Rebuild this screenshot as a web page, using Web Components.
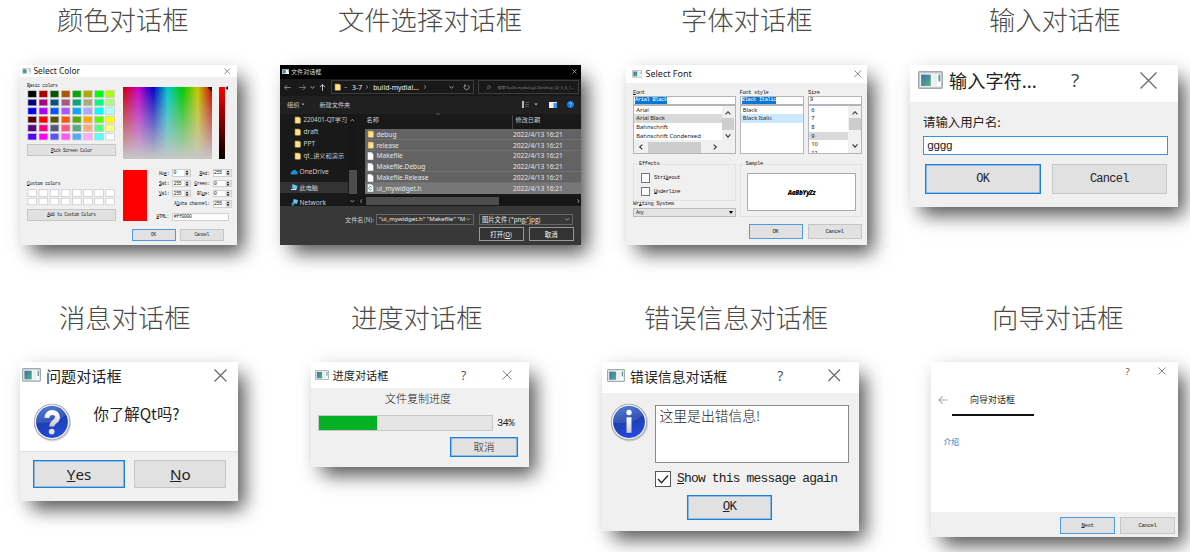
<!DOCTYPE html>
<html lang="zh-CN"><head><meta charset="utf-8"><title>Qt 对话框</title>
<style>
body{margin:0;background:#fff;width:1190px;height:552px;overflow:hidden}
</style></head><body>
<dialog-gallery></dialog-gallery>
<script>
const BASE = `
:host{display:block;box-sizing:border-box;font-family:"Noto Sans","Noto Sans CJK SC",sans-serif;color:#222}
*{box-sizing:border-box}
svg{display:block;flex:none}
.row{display:flex}.col{display:flex;flex-direction:column}
.grow{flex:1}
.mono{font-family:"Liberation Mono","Noto Sans CJK SC",monospace;letter-spacing:-.062em;white-space:nowrap}
.cjk{font-family:"Noto Sans CJK SC",sans-serif;white-space:nowrap}
u{text-underline-offset:.08em;text-decoration-thickness:from-font}
`;
function define(name, css, html) {
  customElements.define(name, class extends HTMLElement {
    constructor() {
      super();
      const root = this.attachShadow({mode: 'open'});
      root.innerHTML = '<style>' + BASE + css + '</style>' + (typeof html === 'function' ? html(this) : html);
    }
  });
}
const num = (el, name, fallback) => +(el.getAttribute(name) ?? fallback);

/* Application icon used in every title bar */
define('app-icon', ':host{flex:none}svg{width:100%;height:100%}',
`<svg viewBox="0 0 24 17" preserveAspectRatio="none"><defs><linearGradient id="g" x2="1" y2="1"><stop stop-color="#3d6fa0"/><stop offset="1" stop-color="#54b38b"/></linearGradient></defs>
<rect x=".7" y=".7" width="22.6" height="15.6" rx="1" fill="#dfe3e6" stroke="#a3a8ac" stroke-width="1.4"/><rect x="2.4" y="3" width="19.2" height="11.6" fill="#fff"/><rect x="3" y="3.4" width="9.3" height="10.8" fill="url(#g)"/><rect x="13.5" y="3.4" width="4.8" height="10.8" fill="#eceeef"/><path d="M20.5 3.4v6.4" stroke="#4d9c92" stroke-width="1.7"/></svg>`);

/* Window title bar: icon, caption, optional help mark, close mark */
define('win-title', `:host{background:#fff}.bar{display:flex;align-items:center;height:100%;white-space:nowrap}.q{text-align:center;color:#444;font-family:"Open Sans",sans-serif}`, el => {
  const x = num(el,'x',8), ic = num(el,'icon',0), qs = num(el,'help',0), gap = num(el,'qgap',0);
  return `<div class="bar" style="padding:0 ${num(el,'pr',6)}px 0 ${num(el,'pl',6)}px">
${ic ? `<app-icon style="width:${ic}px;height:${ic*.72}px;margin-right:${num(el,'gap',4)}px"></app-icon>` : ''}
<span><slot></slot></span><span class="grow"></span>
${qs ? `<span class="q" style="font-size:${qs}px;width:${qs}px;margin-right:${gap-x/2-qs/2}px">?</span>` : ''}
<svg width="${x}" height="${x}" viewBox="0 0 ${x} ${x}"><path d="M.5 .5L${x-.5} ${x-.5}M${x-.5} .5L.5 ${x-.5}" stroke="${el.getAttribute('ink')||'#666'}" stroke-width="${x>12?1.15:.8}"/></svg></div>`;
});

define('push-button', `:host{display:flex;align-items:center;justify-content:center;background:#e1e1e1;border:1px solid #c6c6c6;white-space:pre;flex:none;font-family:"Liberation Mono","Noto Sans CJK SC",monospace;letter-spacing:-.062em}
:host([primary]){border:1px solid #1a80d8;box-shadow:inset 0 0 0 .6px #4a9de2}
:host([slim]){border:1px solid #4c9bde}`, '<slot></slot>');

define('spin-box', `:host{display:flex;width:19px;height:7.6px;border:1px solid #d0d0d0;background:#fff;font-size:4.9px;line-height:5.6px;padding-left:.4px;flex:none}
svg{width:6px;height:5.6px;background:#e4e4e4}`,
`<span class="mono grow"><slot></slot></span><svg viewBox="0 0 6 6.4"><path d="M3 .5L4.7 2.7H1.3zM3 5.9L4.7 3.7H1.3z" fill="#111"/></svg>`);

const COLORS = ['000','a00','005500','aa5500','0a0','aa0','0f0','af0','00007f','aa007f','00557f','aa557f','00aa7f','aaaa7f','00ff7f','aaff7f','00f','a0f','05f','a5f','0af','aaf','0ff','aff','500','f00','550','f50','5a0','fa0','5f0','ff0','55007f','ff007f','55557f','ff557f','55aa7f','ffaa7f','55ff7f','ffff7f','50f','f0f','55f','f5f','5af','faf','5ff','fff'];
define('color-dialog', `
:host{width:216.5px;height:180px;background:#f0f0f0;font-size:4.75px}
win-title{height:12.5px;font-size:8.4px}
.body{padding:5.5px 0 0 7px}
.left{width:89px;margin-right:7px}
.lab{height:6px;line-height:6px}
.sw svg{width:89px}
push-button{font-size:4.5px}
.wide{width:89px;height:11.7px}
.plane{width:88.5px;height:71.5px;background:linear-gradient(transparent,#c8c8c8),linear-gradient(90deg,#c80000,#c800c8 17%,#0000c8 34%,#00c8c8 50%,#00c800 67%,#c8c800 84%,#c80000)}
.plane svg{margin-left:auto}
.val{width:5.5px;height:72px;background:linear-gradient(red,#000);margin-left:7.5px}
.preview{width:23.7px;height:51px;background:red;margin-right:6.5px}
.f{align-items:center;height:10.3px}.f>b{font-weight:400;text-align:right}
.a{width:16px;margin-right:3px}.b{width:17.5px;margin:0 3px 0 1px}
.html{width:57px;height:7.5px;background:#fff;border:1px solid #d0d0d0;line-height:5.6px;padding-left:.6px}
.btns{margin:6.5px 0 0 111.5px;gap:4.2px}.btns>*{width:44px;height:12px}
`, () => {
  const wells = list => `<svg width="89" height="${list.length/8*8.53}">${list.map((c,i)=>`<rect x="${.9+i%8*11.13}" y="${.7+Math.floor(i/8)*8.53}" width="8.7" height="6.6" fill="#${c}" stroke="${c==='f00'?'#a9a9a9':'#c6c6c8'}" stroke-width=".7"/>`).join('')}</svg>`;
  return `<win-title icon="9" pl="1.5" gap="3" x="6.4" pr="5.8" ink="#777">Select Color</win-title>
<div class="row body"><div class="col left">
<div class="lab mono"><u>B</u>asic colors</div>
<div style="margin-top:1.8px">${wells(COLORS)}</div>
<push-button class="wide" style="margin-top:3px"><u>P</u>ick Screen Color</push-button>
<div class="lab mono" style="margin-top:24.5px"><u>C</u>ustom colors</div>
<div style="margin-top:2.6px">${wells(Array(16).fill('fff'))}</div>
<push-button class="wide" style="margin-top:2.6px"><u>A</u>dd to Custom Colors</push-button>
</div><div class="col" style="padding-top:4.5px">
<div class="row"><div class="plane"><svg width="5" height="4"><path d="M1 .8h4M4 .5v3.5" stroke="#000" stroke-width="1.3"/></svg></div><div class="val"></div><svg width="3" height="4" style="margin-top:-1px"><path d="M3 0v4L.5 2z"/></svg></div>
<div class="row" style="margin-top:10.5px"><div class="preview"></div><div class="col mono" style="margin-top:-1.6px">
<div class="row f"><b class="a">Hu<u>e</u>:</b><spin-box>0</spin-box><b class="b"><u>R</u>ed:</b><spin-box>255</spin-box></div>
<div class="row f"><b class="a"><u>S</u>at:</b><spin-box>255</spin-box><b class="b"><u>G</u>reen:</b><spin-box>0</spin-box></div>
<div class="row f"><b class="a"><u>V</u>al:</b><spin-box>255</spin-box><b class="b">Bl<u>u</u>e:</b><spin-box>0</spin-box></div>
<div class="row f"><b style="width:56.5px;margin-right:3px">A<u>l</u>pha channel:</b><spin-box>255</spin-box></div>
<div class="row f" style="margin-top:2.7px"><b class="a"><u>H</u>TML:</b><span class="html">#ff0000</span></div>
</div></div></div></div>
<div class="row btns"><push-button slim>OK</push-button><push-button>Cancel</push-button></div>`;
});

/* Small glyphs for the file list */
const FOLDER = '<svg width="7" height="8" viewBox="0 0 7 8"><path d="M.8.7h4.4v1h1v5.5H.8z" fill="#dda73c"/><path d="M1.5 1.6h5v5.7h-5z" fill="#ffe08a"/></svg>';
const FILE = '<svg width="7" height="8" viewBox="0 0 7 8"><path d="M.7.3h3.8l1.8 1.8v5.6H.7z" fill="#fff"/><path d="M4.5.3v1.8h1.8" fill="#bbb"/></svg>';
const CFILE = '<svg width="7" height="8" viewBox="0 0 7 8"><path d="M.7.3h3.8l1.8 1.8v5.6H.7z" fill="#fff"/><path d="M4.7 3.3a1.6 1.6 0 1 0 0 2" fill="none" stroke="#338db5" stroke-width="1"/></svg>';
const chev = (d, w=4.6, c='#aaa') => { const p={d:'M.5 1.2L2.5 3.4L4.5 1.2',u:'M.5 3.6L2.5 1.4L4.5 3.6',r:'M1.4 .5L3.6 2.5L1.4 4.5',l:'M3.6 .5L1.4 2.5L3.6 4.5'}[d]; return `<svg width="${w}" height="${w}" viewBox="0 0 5 5"><path d="${p}" fill="none" stroke="${c}" stroke-width=".9"/></svg>`; };
const arrow = (c, r=0, w=8) => `<svg width="${w}" height="${w}" viewBox="0 0 8 8" style="transform:rotate(${r}deg)"><path d="M7.8 4H.8M3.6 1.1L.7 4l2.9 2.9" fill="none" stroke="${c}" stroke-width=".9"/></svg>`;

define('file-dialog', `
:host{width:301px;height:180px;background:#191919;color:#cfcfcf;font-size:6.8px;display:flex;flex-direction:column}
win-title{background:#000;height:14.5px;font-size:6.1px;color:#ddd}
.nav{height:16.5px;align-items:center;padding-left:4px;flex:none}
.addr{width:143px;height:14px;border:1px solid #3c3c3c;align-items:center;padding-left:2px;margin-left:4.5px;color:#eee;font-size:6.9px;white-space:nowrap}
.search{width:101px;height:14px;border:1px solid #3c3c3c;align-items:center;margin-left:4px;color:#858585;font-size:3.9px;padding-left:7px;white-space:nowrap}
.tools{height:18px;background:#202020;align-items:center;padding:0 7px;font-size:6.2px;flex:none;white-space:nowrap}
.main{height:92px;flex:none}
.side{width:68px;height:92px;flex:none;white-space:nowrap;font-size:6.6px}
.side .it{height:12.1px;align-items:center;padding-left:14px;gap:2.5px;flex:none}
.sb{width:9px;background:#171717;height:92px;align-items:center;flex:none}
.list{margin-left:7.5px;width:216.5px}
.head{height:15.5px;padding-top:1px;line-height:10px;font-size:6.2px;padding-left:2px}
.r{height:10.8px;background:linear-gradient(#636363 10.1px,#707070 0);align-items:center;padding-left:2px;gap:3px;color:#e6e6e6;font-size:6.6px}
.r.on{background:#777}
.foot{background:#383838;height:39px;padding-top:8px;flex:none;position:relative}
.box{height:11.8px;border:1px solid #666;align-items:center;font-size:6.4px;padding:0 2px;white-space:nowrap;color:#eee}
.bt{width:44.5px;height:14px;border:1px solid #999;display:grid;place-items:center;background:#333;font-size:6.4px;color:#fff}
`, `<win-title class="cjk" icon="7.5" pl="1.5" gap="2" x="5" pr="4.5" ink="#aaa">文件对话框</win-title>
<div class="row nav">${arrow('#999',0,7)}<span style="width:8px"></span>${arrow('#888',180,7)}<span style="width:4px"></span>${chev('d',5)}<span style="width:4px"></span>${arrow('#eee',90,7)}
<div class="row addr">${FOLDER}<span style="margin:0 5px 0 4px;font-size:5px">–</span><span>3-7</span><span style="width:3px"></span>${chev('r',4)}<span style="margin:0 4px">build-mydial...</span>${chev('r',4)}<span class="grow"></span>${chev('d',5)}<svg width="7" height="7" viewBox="0 0 7 7" style="margin:0 3px 0 9px"><path d="M5.3 1.2A2.5 2.5 0 1 1 1.8 1.4M1 1h1.7v1.7" fill="none" stroke="#aaa" stroke-width=".8"/></svg></div>
<div class="row search"><svg width="5" height="5" viewBox="0 0 5 5" style="margin-right:7px"><circle cx="3" cy="2" r="1.4" fill="none" stroke="#777" stroke-width=".6"/><path d="M2 3L.5 4.6" stroke="#777" stroke-width=".6"/></svg><span>搜索"build-mydialog2-Desktop_Qt_5_6_1...</span></div></div>
<div class="row tools cjk"><span>组织</span><svg width="4" height="3" style="margin-left:2px"><path d="M.5.5h3L2 2.5z" fill="#aaa"/></svg><span style="margin-left:14px">新建文件夹</span><span class="grow"></span>
<svg width="8" height="7"><path d="M1 0v7" stroke="#ddd" stroke-width="1.6"/><path d="M3 1.5h4M3 3.5h4M3 5.5h4" stroke="#777" stroke-width=".6"/></svg><svg width="4" height="3" style="margin:0 11px 0 4px"><path d="M.5.5h3L2 2.5z" fill="#bbb"/></svg>
<svg width="8" height="6" style="margin-right:10.5px"><path d="M0 0h8v6H0z" fill="#eee"/><path d="M4.5 1H8v5H4.5z" fill="#3996e6"/></svg>
<svg width="7" height="7" viewBox="0 0 7 7"><circle cx="3.5" cy="3.5" r="3.5" fill="#0878d8"/><path d="M2.4 2.7c0-1.6 2.3-1.5 2.3-.1 0 .9-1.1.9-1.1 1.8M3.6 5v.7" fill="none" stroke="#fff" stroke-width=".7"/></svg></div>
<div class="row main"><div class="col side"><div class="row it"><span>${FOLDER}</span><span style="font-size:6.2px">220401-QT学习</span></div><div class="row it">${FOLDER}draft</div><div class="row it">${FOLDER}PPT</div><div class="row it cjk" style="font-size:6.2px">${FOLDER}qt_讲义和演示</div>
<div class="row it" style="padding-left:9.5px;margin-top:4px;gap:2px"><svg width="8" height="6" viewBox="0 0 8 6"><path d="M1.8 5.5a1.6 1.6 0 0 1 0-3.1A2.5 2.5 0 0 1 6.2 2 1.8 1.8 0 0 1 6.4 5.5z" fill="#1490df"/></svg>OneDrive</div>
<div class="row it cjk" style="padding-left:10.5px;margin-top:3.7px;background:#333;height:11px;font-size:6.2px;gap:2px"><svg width="7" height="7" viewBox="0 0 7 7"><path d="M1.5 0L6.5 2 5.5 6 1 4z" fill="#68c5f5"/><path d="M0 5.5h5" stroke="#cce8f6"/></svg>此电脑</div>
<div class="row it" style="padding-left:10.5px;margin-top:4.2px;gap:2px"><svg width="7" height="7" viewBox="0 0 7 7"><path d="M2.5 0L7 1 6 5 2 4z" fill="#68c5f5"/><circle cx="2" cy="5" r="1.7" fill="#318cc6"/></svg>Network</div></div>
<div class="col sb"><span style="height:4px"></span>${chev('u')}<span style="height:47.5px"></span><span style="width:8px;height:24px;background:#4d4d4d"></span><span style="height:5px"></span>${chev('d')}</div>
<div class="col list"><div class="row head cjk"><span style="width:69px">名称</span><span style="width:76px;margin-top:-2.5px">${chev('u',4,'#777')}</span><span style="border-left:1px solid #444;height:14px;padding-left:3px">修改日期</span></div>
${[[FOLDER,'debug'],[FOLDER,'release'],[FILE,'Makefile'],[FILE,'Makefile.Debug'],[FILE,'Makefile.Release'],[CFILE,'ui_mywidget.h']].map((f,i)=>`<div class="row r${i==5?' on':''}">${f[0]}<span style="width:133.5px">${f[1]}</span>2022/4/13 16:21</div>`).join('')}
<div class="row" style="height:9px;margin:2.7px 0 0 -6px;align-items:center;background:#151515;flex:none">${chev('l')}<span style="width:133px;height:8px;background:#4d4d4d;margin-left:3px"></span><span class="grow"></span>${chev('r')}</div></div></div>
<div class="foot"><div class="row" style="padding-left:65px"><span class="cjk" style="width:31px;line-height:11.8px;font-size:6.2px">文件名(<u>N</u>):</span><div class="row box" style="width:97.5px;font-size:6.05px"><span class="grow">"ui_mywidget.h" "Makefile" "M</span>${chev('d')}</div><div class="row box cjk" style="width:94px;margin-left:5.5px;font-size:6.3px"><span class="grow">图片文件 (*png;*jpg)</span>${chev('d')}</div></div>
<div class="row cjk" style="gap:5.5px;margin:1.8px 0 0 199px"><div class="bt"><span>打开(<u>O</u>)</span></div><div class="bt">取消</div></div></div>`);

define('font-dialog', `
:host{width:241px;height:180px;background:#f0f0f0;font-size:5.4px;color:#222}
win-title{height:18.5px;font-size:9px}
.cols{padding:6.5px 0 0 7px;gap:4px}
.lab{height:6px;line-height:6px}
.ed{height:9.3px;border:1px solid #b4b4ba;background:#fff;padding:.3px 1px;line-height:6.8px}
.ed span{background:#0878d7;color:#fff;display:inline-block;height:6.8px}
.ls{height:49.5px;border:1px solid #b4b4ba;background:#fff;font-size:5.9px;overflow:hidden;display:flex}
.it{height:8.6px;line-height:8.6px;padding-left:2.2px;white-space:nowrap}
.on{background:#d9d9d9}.blue{background:#cce8ff}
.sb{width:13px;align-items:center;background:#f0f0f0;padding:4px 0;flex:none}
.sb i{width:12px;height:12px;background:#cdcdcd}
.grp{border:1px solid #e2e2e2;position:relative}.grp>label{position:absolute;top:-3.5px;left:4px;background:#f0f0f0;padding:0 1px;line-height:6px}
.ck{align-items:center;gap:4px;height:13.4px}.ck i{width:9.6px;height:9.6px;background:#fff;border:1px solid #777}
.samp{height:38px;width:109px;border:1px solid #aaa;background:#fff;display:grid;place-items:center;margin:8.5px 0 0 6.5px;font:italic 900 6.4px "Open Sans",sans-serif;color:#000}
.btns{margin:7px 0 0 122.5px;gap:5px}.btns>*{width:54px;height:14.6px;font-size:5.6px}
`, `<win-title icon="10.5" pl="5.5" gap="3.5" x="7.5" pr="5.5">Select Font</win-title>
<div class="row cols"><div style="width:102.5px"><div class="lab mono"><u>F</u>ont</div><div class="ed mono"><span>Arial Black</span></div>
<div class="ls"><div class="grow"><div class="it">Arial</div><div class="it on">Arial Black</div><div class="it">Bahnschrift</div><div class="it">Bahnschrift Condensed</div><div class="row" style="height:14px;align-items:center;background:#f0f0f0;padding:0 4px">${chev('l',6,'#333')}<i style="width:53px;height:11px;background:#cdcdcd;margin-left:3.5px"></i><span class="grow"></span>${chev('r',6,'#333')}</div></div><div class="col sb">${chev('u',6,'#333')}<i style="margin-top:2.3px"></i><span style="height:3px"></span>${chev('d',6,'#333')}</div></div></div>
<div style="width:64.5px"><div class="lab mono">Font st<u>y</u>le</div><div class="ed mono"><span>Black Italic</span></div><div class="ls"><div class="grow"><div class="it">Black</div><div class="it blue">Black Italic</div></div></div></div>
<div style="width:54px"><div class="lab mono"><u>S</u>ize</div><div class="ed mono">9</div><div class="ls"><div class="grow">${[6,7,8,9,10,11].map(n=>`<div class="it${n==9?' on':''}">${n}</div>`).join('')}</div><div class="col sb">${chev('u',6,'#333')}<i style="margin-top:2.3px"></i><span class="grow"></span>${chev('d',6,'#333')}</div></div></div></div>
<div class="row mono" style="padding:9.3px 0 0 7px;gap:4px"><div style="width:102.5px"><div class="grp" style="height:37px;padding:7px 0 0 6.5px"><label>Effects</label><div class="row ck"><i></i><span>Stri<u>k</u>eout</span></div><div class="row ck"><i></i><span><u>U</u>nderline</span></div></div>
<div class="lab" style="margin-top:.8px">Wr<u>i</u>ting System</div><div class="row" style="height:9px;margin-top:.6px;background:#e3e3e3;border:1px solid #bbb;align-items:center;padding:0 2px;font-size:4.8px;line-height:7px"><span class="grow">Any</span><svg width="4" height="3"><path d="M0 0h4L2 3z"/></svg></div></div>
<div class="grp" style="width:122.5px;height:53px"><label>Sample</label><div class="samp"><span>AaBbYyZz</span></div></div></div>
<div class="row btns"><push-button slim>OK</push-button><push-button>Cancel</push-button></div>`);

define('input-dialog', `
:host{width:268px;height:142.5px;background:#f0f0f0}
win-title{height:37.5px;font-size:18.2px;padding-bottom:6px}
.lab{font-size:12.4px;line-height:20px;margin:9.5px 0 0 13px}
.in{width:245px;height:19px;margin:4.5px 0 0 13px;border:1px solid #3c93dc;background:#fff;font-size:11.6px;line-height:18px;padding-left:3px}
.btns{margin:9px 0 0 15px;gap:11px}.btns>*{width:115.5px;height:30px;font-size:12px}
`, `<win-title class="cjk" icon="25" pl="8" gap="6" x="17" pr="21.5" help="19" qgap="73">输入字符...</win-title>
<div class="lab cjk">请输入用户名:</div><div class="in mono">gggg</div>
<div class="row btns"><push-button primary>OK</push-button><push-button>Cancel</push-button></div>`);

/* Glossy blue round icon with "?" or "i" */
define('round-icon', ':host{width:40px;height:40px;flex:none}', el => `<svg width="40" height="40" viewBox="0 0 40 40"><defs><linearGradient id="b" x2=".3" y2="1"><stop stop-color="#3b6fd6"/><stop offset=".5" stop-color="#1a3fae"/><stop offset="1" stop-color="#2448d8"/></linearGradient><linearGradient id="s" x2="0" y2="1"><stop stop-color="#fff"/><stop offset="1" stop-color="#c9c9cf"/></linearGradient></defs>
<circle cx="20.6" cy="20.8" r="18.6" fill="#000" opacity=".15"/><circle cx="20" cy="20" r="18.2" fill="#9a9da3"/><circle cx="20" cy="20" r="17.4" fill="#eceef1"/><circle cx="20" cy="20" r="15.9" fill="url(#b)"/><path d="M4.6 21A15.6 15.6 0 0 1 34 13Q24 22 4.6 21z" fill="#fff" opacity=".13"/>
${el.getAttribute('kind')==='question' ? '<path d="M15 16c-.2-7.5 10.6-7.2 10.5-.6-.1 4.3-5.7 4.3-5.7 9" fill="none" stroke="url(#s)" stroke-width="5"/><circle cx="19.7" cy="29.6" r="2.9" fill="#e4e4e8"/>' : '<circle cx="20" cy="10.5" r="2.7" fill="#fff"/><path d="M17.5 15.3h5v15.5h-5z" fill="url(#s)"/>'}</svg>`);

define('question-dialog', `
:host{width:218px;height:138.5px;background:#fff}
win-title{height:26px;font-size:15.1px}
.msg{height:64px;padding-left:11.5px;border-bottom:1px solid #dfdfdf}
.msg span{font-size:15.4px;line-height:24px;margin:12.5px 0 0 22px}
.btns{background:#f0f0f0;height:48.5px;padding:7.5px 0 0 13px;gap:9.3px}.btns>*{width:92px;height:28px;font-size:15.2px;font-family:"Noto Sans",sans-serif;letter-spacing:0}
`, `<win-title class="cjk" icon="19" pl="2" gap="5" x="13" pr="11.5">问题对话框</win-title>
<div class="row msg"><round-icon kind="question" style="margin-top:14px"></round-icon><span class="cjk">你了解Qt吗?</span></div>
<div class="row btns"><push-button primary><u>Y</u>es</push-button><push-button><u>N</u>o</push-button></div>`);

define('progress-dialog', `
:host{width:218px;height:104.5px;background:#f0f0f0}
win-title{height:26px;font-size:11.2px}
.lab{text-align:center;font-size:11px;line-height:16px;padding-top:1.5px;margin-bottom:1px;font-weight:300}
.bar{width:175px;height:16px;border:1px solid #c8c8c8;background:#e5e5e5}.bar i{display:block;width:58px;height:14px;background:#06b025}
`, `<win-title class="cjk" icon="14" pl="4.5" gap="3.5" x="10" pr="16.5" help="12" qgap="43.5">进度对话框</win-title>
<div class="lab cjk" style="padding-right:3px">文件复制进度</div>
<div class="row" style="margin:9px 0 0 7.5px"><div class="bar"><i></i></div><span class="mono" style="font-size:10.4px;line-height:16px;margin-left:4px">34%</span></div>
<push-button primary style="width:68px;height:20px;margin:6px 0 0 139.5px;font-size:10.5px;letter-spacing:0;font-weight:300">取消</push-button>`);

define('error-dialog', `
:host{width:256.5px;height:169px;background:#f0f0f0}
win-title{height:31px;font-size:13.9px;padding-bottom:4px}
.text{width:194px;height:58px;border:1px solid #8a8a90;background:#fff;font-size:13.8px;line-height:18.5px;padding-left:3.5px;font-weight:300}
.ck{width:16px;height:16px;border:1px solid #555;background:#fff}
`, `<win-title class="cjk" icon="18" pl="5" gap="5" x="12.5" pr="18" help="14" qgap="54">错误信息对话框</win-title>
<div class="row" style="padding:12px 0 0 6.5px"><round-icon kind="info" style="margin:-3px 6.5px 0 0"></round-icon><div class="text cjk">这里是出错信息!</div></div>
<div class="row" style="margin:7.5px 0 0 53px"><div class="ck"><svg width="14" height="14"><path d="M2 7l3.5 3.8L12 3.5" fill="none" stroke="#222" stroke-width="1.3"/></svg></div><span class="mono" style="font-size:12.95px;line-height:16px;margin-left:6px"><u>S</u>how this message again</span></div>
<push-button primary style="width:85px;height:25px;margin:8px 0 0 85px;font-size:12.5px"><u>O</u>K</push-button>`);

define('wizard-dialog', `
:host{width:247px;height:175px;background:#fff}
win-title{height:18.5px}
.foot{background:#f0f0f0;height:25px;gap:5px;padding:5px 0 0 129px;margin-top:63px}.foot>*{width:55px;height:17px;font-size:5.6px}
`, `<win-title x="8" pr="12" help="9.5" qgap="34.5"></win-title>
<div class="row" style="align-items:center;height:14px;padding:0 0 0 6.5px;margin-top:12.4px">${arrow('#aaa',0,10)}<span class="cjk" style="font-size:9px;margin-left:22.5px">向导对话框</span></div>
<div style="width:82px;height:2.3px;background:#111;margin:6.8px 0 0 20.5px"></div>
<div class="cjk" style="font-size:7.8px;line-height:14px;color:#3b5fae;margin:19px 0 0 12.5px">介绍</div>
<div class="row foot"><push-button slim><u>N</u>ext</push-button><push-button>Cancel</push-button></div>`);

/* Gallery cell: heading above a shadowed dialog */
define('dialog-card', `
h2{margin:0 0 0 var(--tx,0);font:300 26.3px/38px "Noto Sans CJK SC",sans-serif;color:#4a4a4a;white-space:nowrap;height:40px}
.shade{width:fit-content;margin-top:24.5px;box-shadow:9px 11px 18px -3px rgba(0,0,0,.64),4px 4px 20px rgba(0,0,0,.1)}
`, '<h2><slot name="heading"></slot></h2><div class="shade"><slot></slot></div>');

define('dialog-gallery', `
.line{display:grid}
.one{grid-template-columns:260px 346px 284px 280px;padding-left:20px;height:297.5px}
.two{grid-template-columns:290.5px 291.5px 329px 259px;padding-left:20px}
`, `<div class="line one">
<dialog-card style="--tx:37px"><span slot="heading">颜色对话框</span><color-dialog></color-dialog></dialog-card>
<dialog-card style="--tx:58px"><span slot="heading">文件选择对话框</span><file-dialog></file-dialog></dialog-card>
<dialog-card style="--tx:55px"><span slot="heading">字体对话框</span><font-dialog></font-dialog></dialog-card>
<dialog-card style="--tx:79px"><span slot="heading">输入对话框</span><input-dialog></input-dialog></dialog-card>
</div><div class="line two">
<dialog-card style="--tx:39px"><span slot="heading">消息对话框</span><question-dialog></question-dialog></dialog-card>
<dialog-card style="--tx:40.5px"><span slot="heading">进度对话框</span><progress-dialog></progress-dialog></dialog-card>
<dialog-card style="--tx:42px"><span slot="heading">错误信息对话框</span><error-dialog></error-dialog></dialog-card>
<dialog-card style="--tx:61px"><span slot="heading">向导对话框</span><wizard-dialog></wizard-dialog></dialog-card>
</div>`);
</script></body></html>
